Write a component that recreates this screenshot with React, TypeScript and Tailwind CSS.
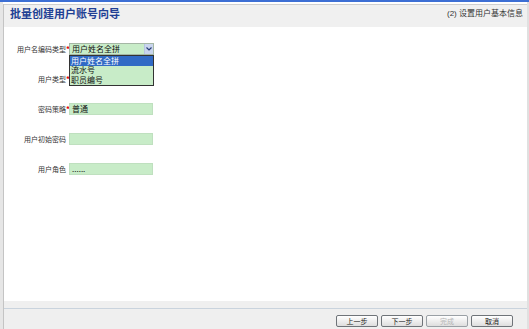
const CJK = "font-['Noto_Sans_CJK_SC','Liberation_Sans',sans-serif]";

type Row = { label: string; required: boolean; value?: string; select?: boolean };

const ROWS: Row[] = [
  { label: "用户名编码类型", required: true, value: "用户姓名全拼", select: true },
  { label: "用户类型", required: true, value: "", select: true },
  { label: "密码策略", required: true, value: "普通" },
  { label: "用户初始密码", required: false, value: "" },
  { label: "用户角色", required: false, value: "......" },
];

const OPTIONS = ["用户姓名全拼", "流水号", "职员编号"];

function Field({ row }: { row: Row }) {
  if (row.select) {
    return (
      <div className="relative flex h-[12px] w-[85px] items-center border border-[#a5b7a5] bg-[#c8ecc8]">
        <span className="flex-1 pl-[2px] text-[8px] leading-none text-[#111]">{row.value}</span>
        <span className="flex h-full w-[9px] items-center justify-center border-l border-[#b7c5e2] bg-[#c9d5ee]">
          <svg width="6" height="4" viewBox="0 0 6 4">
            <path d="M0.5 0.5 L3 3 L5.5 0.5" stroke="#2a3f7a" strokeWidth="1.2" fill="none" />
          </svg>
        </span>
      </div>
    );
  }
  return (
    <div className="flex h-[12px] w-[84px] items-center border border-[#bfe0bf] bg-[#c8ecc8] pl-[2px] text-[8px] leading-none text-[#111]">
      {row.value}
    </div>
  );
}

function Btn({ label, disabled }: { label: string; disabled?: boolean }) {
  return (
    <div
      className={`flex h-[12px] w-[42px] items-center justify-center rounded-[2px] border bg-gradient-to-b from-white to-[#dedede] text-[7px] leading-none ${
        disabled ? "border-[#9aa0a5] text-[#b5b5b5]" : "border-[#6f7479] text-[#222]"
      }`}
    >
      {label}
    </div>
  );
}

export default function App() {
  return (
    <div className={`flex h-[329px] w-[529px] flex-col overflow-hidden bg-white ${CJK}`}>
      <div className="h-[2px] bg-[#3d6fd4]" />
      <div className="flex flex-1 flex-col border-l-[3px] border-r-[2px] border-l-[#e6e6e6] border-r-[#e0e0e0] pt-[2px]">
        <div className="flex flex-1 flex-col border-l border-[#c4c4c4]">
          {/* header */}
          <div className="flex h-[23px] items-start justify-between border-t border-[#cfcfcf] bg-[#f0f0f0] pl-[6px] pr-[4px] pt-[2px]">
            <span className="text-[11px] font-bold leading-[12px] text-[#203f94]">批量创建用户账号向导</span>
            <span className="pt-[1px] text-[8px] leading-[10px] text-[#333]">
              <span className="font-['Liberation_Sans',sans-serif]">(2) </span>设置用户基本信息
            </span>
          </div>

          {/* body */}
          <div className="relative flex flex-1 flex-col gap-[18px] pt-[16px]">
            {ROWS.map((row) => (
              <div key={row.label} className="flex h-[12px] items-center">
                <div className="flex w-[65px] items-center justify-end text-[7px] leading-none text-[#333]">
                  <span>{row.label}</span>
                  <span className={`w-[3px] text-[8px] font-bold ${row.required ? "text-[#e00000]" : "text-transparent"}`}>*</span>
                </div>
                <Field row={row} />
              </div>
            ))}

            {/* open dropdown list */}
            <div className="absolute left-[65px] top-[28px] flex w-[85px] flex-col border border-[#333] bg-[#c8ecc8] text-[8px] leading-none">
              {OPTIONS.map((o, i) => (
                <div
                  key={o}
                  className={`flex h-[9.5px] items-center pl-[1px] ${i === 0 ? "bg-[#316ac5] text-white" : "text-[#111]"}`}
                >
                  {o}
                </div>
              ))}
            </div>
          </div>

          {/* footer */}
          <div className="bg-[#efefef] pt-[7px]">
            <div className="flex h-[21px] items-start justify-end gap-[3px] border-t border-[#c9d3dd] pr-[14px] pt-[6px]">
              <Btn label="上一步" />
              <Btn label="下一步" />
              <Btn label="完成" disabled />
              <Btn label="取消" />
            </div>
          </div>
        </div>
      </div>
    </div>
  );
}
